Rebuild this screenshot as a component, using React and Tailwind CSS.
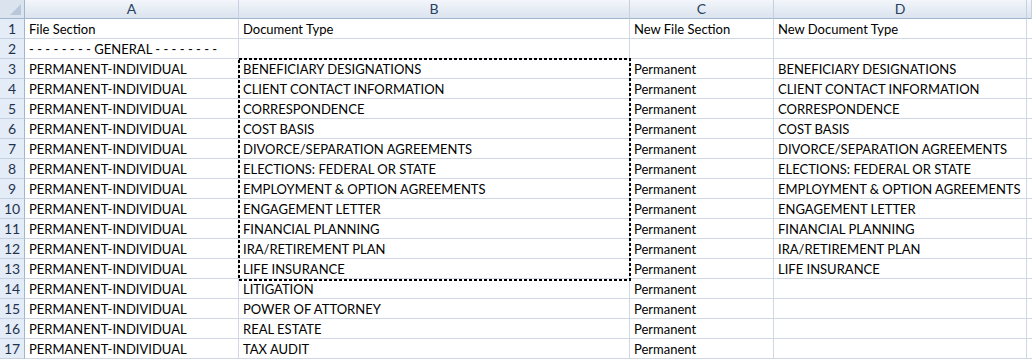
import React from 'react';

const rows = [
    ['File Section', 'Document Type', 'New File Section', 'New Document Type'],
    ['- - - - - - - - GENERAL - - - - - - - -', '', '', ''],
    ['PERMANENT-INDIVIDUAL', 'BENEFICIARY DESIGNATIONS', 'Permanent', 'BENEFICIARY DESIGNATIONS'],
    ['PERMANENT-INDIVIDUAL', 'CLIENT CONTACT INFORMATION', 'Permanent', 'CLIENT CONTACT INFORMATION'],
    ['PERMANENT-INDIVIDUAL', 'CORRESPONDENCE', 'Permanent', 'CORRESPONDENCE'],
    ['PERMANENT-INDIVIDUAL', 'COST BASIS', 'Permanent', 'COST BASIS'],
    ['PERMANENT-INDIVIDUAL', 'DIVORCE/SEPARATION AGREEMENTS', 'Permanent', 'DIVORCE/SEPARATION AGREEMENTS'],
    ['PERMANENT-INDIVIDUAL', 'ELECTIONS: FEDERAL OR STATE', 'Permanent', 'ELECTIONS: FEDERAL OR STATE'],
    ['PERMANENT-INDIVIDUAL', 'EMPLOYMENT & OPTION AGREEMENTS', 'Permanent', 'EMPLOYMENT & OPTION AGREEMENTS'],
    ['PERMANENT-INDIVIDUAL', 'ENGAGEMENT LETTER', 'Permanent', 'ENGAGEMENT LETTER'],
    ['PERMANENT-INDIVIDUAL', 'FINANCIAL PLANNING', 'Permanent', 'FINANCIAL PLANNING'],
    ['PERMANENT-INDIVIDUAL', 'IRA/RETIREMENT PLAN', 'Permanent', 'IRA/RETIREMENT PLAN'],
    ['PERMANENT-INDIVIDUAL', 'LIFE INSURANCE', 'Permanent', 'LIFE INSURANCE'],
    ['PERMANENT-INDIVIDUAL', 'LITIGATION', 'Permanent', ''],
    ['PERMANENT-INDIVIDUAL', 'POWER OF ATTORNEY', 'Permanent', ''],
    ['PERMANENT-INDIVIDUAL', 'REAL ESTATE', 'Permanent', ''],
    ['PERMANENT-INDIVIDUAL', 'TAX AUDIT', 'Permanent', ''],
];

const cols = ['A', 'B', 'C', 'D', ''];

const App = () => {
    return (
        <div className="relative w-[1032px] h-[359px] overflow-hidden bg-white font-['Lato',sans-serif] text-[13px] text-black">
            <div className="grid grid-cols-[25px_214px_391px_144px_253px_1fr] grid-rows-[19px_repeat(17,20px)]">
                {/* column headers */}
                <div className="relative bg-[#dbe3ee] border-r border-b border-[#9eb6ce]">
                    <div className="absolute right-[3px] bottom-[3px] w-0 h-0 border-l-[11px] border-l-transparent border-b-[11px] border-b-[#b9c7da]"></div>
                </div>
                {cols.map((c, i) => (
                    <div
                        key={i}
                        className="flex items-center justify-center bg-gradient-to-b from-[#f3f6fb] to-[#dbe3ee] border-r border-b border-r-[#c5d1e0] border-b-[#9eb6ce] text-[14px] text-[#27415f] leading-none"
                    >
                        {c}
                    </div>
                ))}

                {rows.map((r, i) => (
                    <React.Fragment key={i}>
                        <div className="flex items-center justify-center bg-[#e4ecf7] border-r border-b border-r-[#9eb6ce] border-b-[#c5d1e0] text-[14px] text-[#1f3350] leading-none">
                            {i + 1}
                        </div>
                        {r.map((v, j) => (
                            <div key={j} className="flex items-center pl-[4px] pt-[1px] border-r border-b border-[#d0d7e5] whitespace-nowrap overflow-hidden leading-none">
                                {v}
                            </div>
                        ))}
                        <div className="border-b border-[#d0d7e5]"></div>
                    </React.Fragment>
                ))}
            </div>

            {/* copy selection marquee over B3:B13 */}
            <svg className="absolute left-[238px] top-[58px]" width="393" height="223">
                <rect x="1" y="1" width="391" height="221" fill="none" stroke="#000" strokeWidth="2" strokeDasharray="3 2" />
            </svg>
        </div>
    );
};

export default App;
